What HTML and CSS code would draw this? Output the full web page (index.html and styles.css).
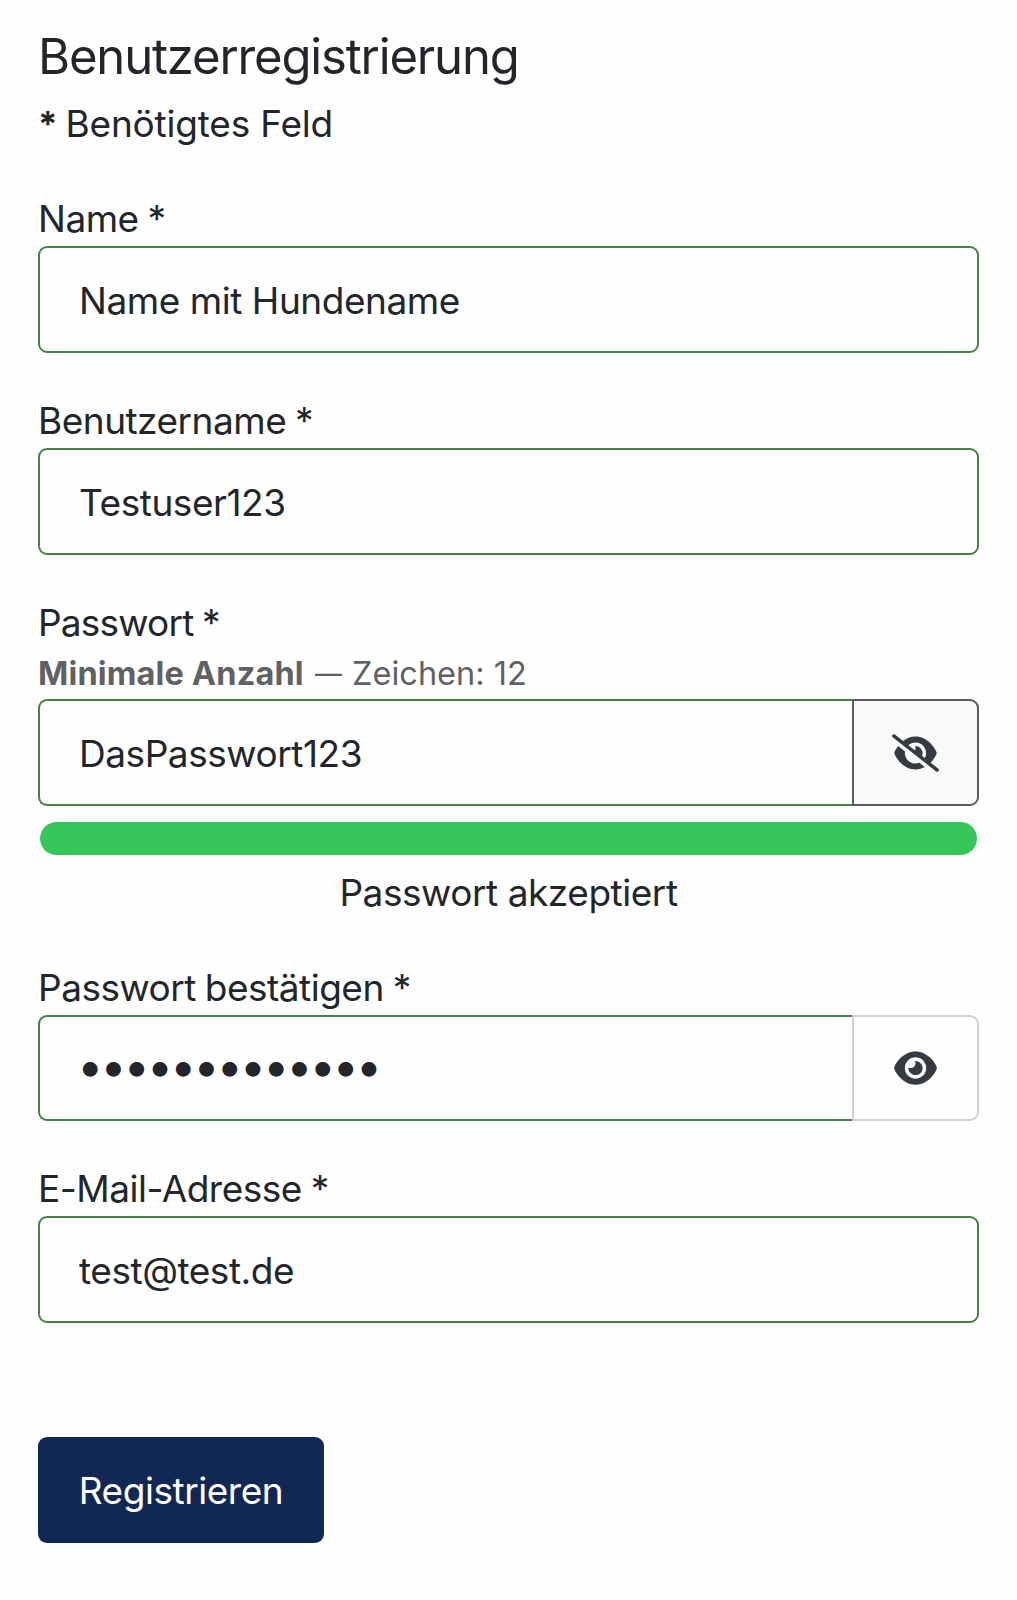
FILE: index.html
```html
<!DOCTYPE html>
<html lang="de">
<head>
    <meta charset="UTF-8">
    <meta name="viewport" content="width=device-width, initial-scale=1.0">
    <title>Benutzerregistrierung</title>
    <link rel="stylesheet" href="styles.css">
</head>
<body>
    <form class="registration">
        <h1>Benutzerregistrierung</h1>
        <p class="required-note"><strong>*</strong> Benötigtes Feld</p>

        <div class="field">
            <label for="name">Name *</label>
            <input class="form-control" type="text" id="name" value="Name mit Hundename">
        </div>

        <div class="field">
            <label for="username">Benutzername *</label>
            <input class="form-control" type="text" id="username" value="Testuser123">
        </div>

        <div class="field">
            <label class="tight" for="password1">Passwort *</label>
            <div class="rules"><strong>Minimale Anzahl</strong> <span class="dash">—</span> Zeichen: 12</div>
            <div class="input-group">
                <input class="form-control" type="text" id="password1" value="DasPasswort123">
                <button class="toggle active" type="button" aria-label="Passwort verbergen">
                    <svg class="icon-slash" viewBox="0 0 640 512"><path d="M38.8 5.1C28.4-3.1 13.3-1.2 5.1 9.2S-1.2 34.7 9.2 42.9l592 464c10.4 8.200 25.500 6.300 33.700-4.100s6.300-25.500-4.100-33.700L525.600 386.700c39.600-40.600 66.400-86.100 79.900-118.400c3.300-7.900 3.300-16.700 0-24.600c-14.900-35.700-46.200-87.700-93-131.100C465.500 68.800 400.800 32 320 32c-68.200 0-125 26.300-169.300 60.800L38.800 5.100zM223.100 149.500C248.600 126.200 282.700 112 320 112c79.500 0 144 64.500 144 144c0 24.900-6.300 48.300-17.400 68.700L408 294.500c8.400-19.300 10.600-41.400 4.800-63.300c-11.100-41.500-47.800-69.400-88.600-71.100c-5.800-.2-9.200 6.100-7.400 11.700c2.100 6.400 3.300 13.200 3.300 20.300c0 10.200-2.400 19.800-6.600 28.300l-90.300-70.800zM373 389.900c-16.400 6.500-34.300 10.100-53 10.100c-79.500 0-144-64.500-144-144c0-6.900 .5-13.600 1.400-20.200L83.100 161.500C60.300 191.200 44 220.800 34.500 243.700c-3.300 7.900-3.300 16.700 0 24.600c14.900 35.700 46.200 87.700 93 131.100C174.500 443.200 239.200 480 320 480c47.800 0 89.900-12.900 126.200-32.500L373 389.900z"/></svg>
                </button>
            </div>
            <div class="meter"></div>
            <div class="meter-text">Passwort akzeptiert</div>
        </div>

        <div class="field">
            <label for="password2">Passwort bestätigen *</label>
            <div class="input-group">
                <input class="form-control masked" type="password" id="password2" value="DasPasswort12">
                <button class="toggle" type="button" aria-label="Passwort anzeigen">
                    <svg class="icon-eye" viewBox="0 0 576 512"><path d="M288 32c-80.800 0-145.500 36.800-192.600 80.600C48.600 156 17.300 208 2.500 243.700c-3.300 7.900-3.300 16.700 0 24.600C17.300 304 48.600 356 95.400 399.400C142.500 443.200 207.200 480 288 480s145.500-36.800 192.600-80.600c46.800-43.500 78.100-95.400 93-131.100c3.300-7.900 3.300-16.700 0-24.600c-14.900-35.700-46.200-87.700-93-131.100C433.500 68.800 368.800 32 288 32zM144 256a144 144 0 1 1 288 0 144 144 0 1 1 -288 0zm144-64c0 35.300-28.700 64-64 64c-7.100 0-13.900-1.200-20.300-3.300c-5.500-1.800-11.900 1.600-11.700 7.400c.3 6.900 1.300 13.800 3.200 20.700c13.700 51.200 66.400 81.600 117.600 67.900s81.600-66.400 67.900-117.600c-11.100-41.500-47.800-69.400-88.600-71.100c-5.800-.2-9.200 6.100-7.400 11.700c2.100 6.400 3.300 13.200 3.300 20.300z"/></svg>
                </button>
            </div>
        </div>

        <div class="field">
            <label for="email">E-Mail-Adresse *</label>
            <input class="form-control" type="email" id="email" value="test@test.de">
        </div>

        <button class="submit" type="submit">Registrieren</button>
    </form>
</body>
</html>
```
FILE: styles.css
```css
* {
    box-sizing: border-box;
}

body {
    margin: 0;
    background-color: #fefefe;
    color: #22262a;
    font-family: Inter, sans-serif;
    font-size: 37px;
    line-height: 56px;
    letter-spacing: -0.45px;
}

.registration {
    padding: 27px 38px 0;
}

h1 {
    margin: 0 0 10px;
    font-size: 49px;
    font-weight: 400;
    line-height: 59px;
    letter-spacing: -1.15px;
}

.required-note {
    margin: 0 0 39px;
    letter-spacing: -0.2px;
}

.required-note strong {
    margin-right: -2px;
    font-size: 35px;
}

.field {
    margin-bottom: 40px;
}

label {
    display: block;
    margin-bottom: -1px;
    letter-spacing: -0.5px;
    word-spacing: -1px;
}

.tight {
    letter-spacing: -0.8px;
}

.form-control {
    display: block;
    width: 100%;
    height: 107px;
    padding: 2px 39px 0;
    border: 2px solid #448344;
    border-radius: 9px;
    background-color: #fefefe;
    color: inherit;
    font: inherit;
    letter-spacing: inherit;
}

.rules {
    margin: -2px 0 1px;
    color: #5f6163;
    font-size: 32.5px;
    line-height: 49px;
    letter-spacing: 0;
}

.rules strong {
    letter-spacing: 0.15px;
}

.dash {
    margin: 0 1px 0 2px;
    font-size: 27px;
    line-height: 1;
    vertical-align: 2px;
}

.input-group {
    display: flex;
}

.input-group .form-control {
    flex: 1;
    min-width: 0;
    border-right: 0;
    border-radius: 9px 0 0 9px;
}

.masked {
    height: 106px;
    padding: 0 39px 6px 37px;
    font-size: 47px;
    letter-spacing: -3.2px;
}

.toggle {
    display: flex;
    align-items: center;
    justify-content: center;
    width: 127px;
    padding: 0;
    border: 2px solid #ced0d6;
    border-radius: 0 9px 9px 0;
    background-color: #fefefe;
    color: #353b41;
}

.toggle.active {
    border-color: #585c61;
    background-color: #f8f9f9;
}

.toggle svg {
    fill: currentColor;
}

.icon-slash {
    width: 47px;
    height: 38px;
}

.icon-eye {
    width: 43px;
    height: 38px;
}

.meter {
    height: 33px;
    margin: 16px 2px 10px;
    border-radius: 17px;
    background-color: #35c759;
}

.meter-text {
    margin-bottom: -1px;
    text-align: center;
}

.submit {
    display: block;
    width: 286px;
    height: 106px;
    margin-top: 114px;
    padding: 2px 0 0;
    border: 0;
    border-radius: 9px;
    background-color: #112855;
    color: #fff;
    font: inherit;
    letter-spacing: inherit;
}
```
